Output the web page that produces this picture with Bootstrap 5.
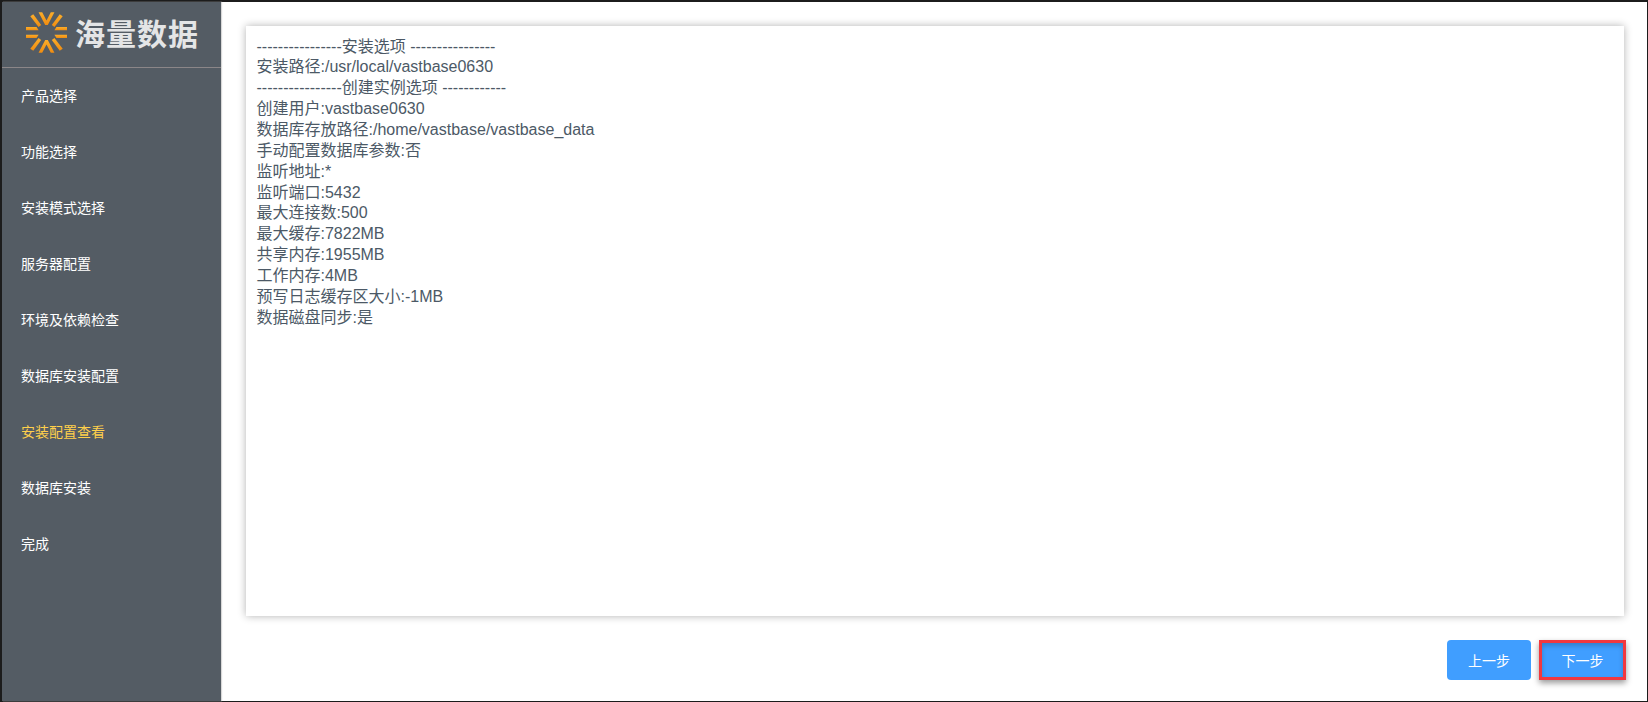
<!DOCTYPE html>
<html lang="zh">
<head>
<meta charset="utf-8">
<title>安装配置查看</title>
<link href="https://cdn.jsdelivr.net/npm/bootstrap@5.3.0/dist/css/bootstrap.min.css" rel="stylesheet">
<style>
html,body{height:100%;overflow:hidden}
body{background:#fff;font-family:"Liberation Sans","Noto Sans CJK SC",sans-serif;}
.frame{height:702px;width:1648px;border:1px solid #1c1c1c;border-top-width:2px;border-left-width:2px}
.side{width:219px;background:#545c64;flex:none;box-shadow:1px 0 1px #d8d8d8}
.brand{height:66px;border-bottom:1px solid #8b8688;padding:0 0 5px 24px;gap:8px}
.brand-name{font-family:"Noto Sans CJK SC",sans-serif;font-weight:700;font-size:30px;line-height:1;color:#e4e5e6;letter-spacing:1px}
.menu-list{margin-top:-1px}
.menu-row{height:56px;padding-left:19px;color:#fff;font-size:14px;font-family:"Noto Sans CJK SC",sans-serif;font-weight:400}
.menu-row.on{color:#ffd04b}
.main-area{padding:24px 21px 20px 25px;min-width:0}
.sheet{height:590px;margin-right:2px;padding:10.6px 10.5px;background:#fff;box-shadow:0 0 8px rgba(0,0,0,.3);font-size:16px;line-height:20.85px;color:#4c5966;font-family:"Liberation Sans","Noto Sans CJK SC",sans-serif}
.actions{margin-top:24px;gap:8px}
.step-btn{width:84px;height:40px;padding:0;background:#409eff;color:#fff;border:0;border-radius:4px;font-size:14px;font-family:"Noto Sans CJK SC",sans-serif;font-weight:400}
.step-btn:hover{background:#409eff;color:#fff}
.step-next{width:87px;height:40px;border:3px solid #f2383f;border-radius:0;box-shadow:0 3px 6px rgba(0,0,0,.4),inset 0 3px 5px rgba(0,0,0,.2)}
</style>
</head>
<body>
<div class="frame d-flex">
  <aside class="side d-flex flex-column">
    <div class="brand d-flex align-items-center">
      <svg width="41" height="41" viewBox="18 21 124 123" aria-label="logo">
        <defs><linearGradient id="logoFill" x1="0" y1="0" x2="0" y2="1"><stop offset="0" stop-color="#fcae2a"/><stop offset="1" stop-color="#f08c10"/></linearGradient></defs>
        <g fill="url(#logoFill)">
          <path d="M56 21H67L80 46 93 21H104L84 60H76Z"/>
          <path d="M56 144H67L80 119 93 144H104L84 105H76Z"/>
          <path d="M31 33 40 27 64 60 56 66Z"/>
          <path d="M129 33 120 27 96 60 104 66Z"/>
          <path d="M31 132 40 138 64 105 56 99Z"/>
          <path d="M129 132 120 138 96 105 104 99Z"/>
          <path d="M18 66H50L56 76H18Z"/>
          <path d="M18 89H56L50 99H18Z"/>
          <path d="M142 66H110L104 76H142Z"/>
          <path d="M142 89H104L110 99H142Z"/>
        </g>
      </svg>
      <span class="brand-name">海量数据</span>
    </div>
    <nav class="menu-list d-flex flex-column">
      <div class="menu-row d-flex align-items-center">产品选择</div>
      <div class="menu-row d-flex align-items-center">功能选择</div>
      <div class="menu-row d-flex align-items-center">安装模式选择</div>
      <div class="menu-row d-flex align-items-center">服务器配置</div>
      <div class="menu-row d-flex align-items-center">环境及依赖检查</div>
      <div class="menu-row d-flex align-items-center">数据库安装配置</div>
      <div class="menu-row on d-flex align-items-center">安装配置查看</div>
      <div class="menu-row d-flex align-items-center">数据库安装</div>
      <div class="menu-row d-flex align-items-center">完成</div>
    </nav>
  </aside>
  <main class="main-area flex-grow-1 d-flex flex-column">
    <div class="sheet">
      <div>----------------安装选项 ----------------</div>
      <div>安装路径:/usr/local/vastbase0630</div>
      <div>----------------创建实例选项 ------------</div>
      <div>创建用户:vastbase0630</div>
      <div>数据库存放路径:/home/vastbase/vastbase_data</div>
      <div>手动配置数据库参数:否</div>
      <div>监听地址:*</div>
      <div>监听端口:5432</div>
      <div>最大连接数:500</div>
      <div>最大缓存:7822MB</div>
      <div>共享内存:1955MB</div>
      <div>工作内存:4MB</div>
      <div>预写日志缓存区大小:-1MB</div>
      <div>数据磁盘同步:是</div>
    </div>
    <div class="actions d-flex justify-content-end">
      <button type="button" class="btn step-btn">上一步</button>
      <button type="button" class="btn step-btn step-next">下一步</button>
    </div>
  </main>
</div>
<script src="https://cdn.jsdelivr.net/npm/bootstrap@5.3.0/dist/js/bootstrap.bundle.min.js"></script>
</body>
</html>
